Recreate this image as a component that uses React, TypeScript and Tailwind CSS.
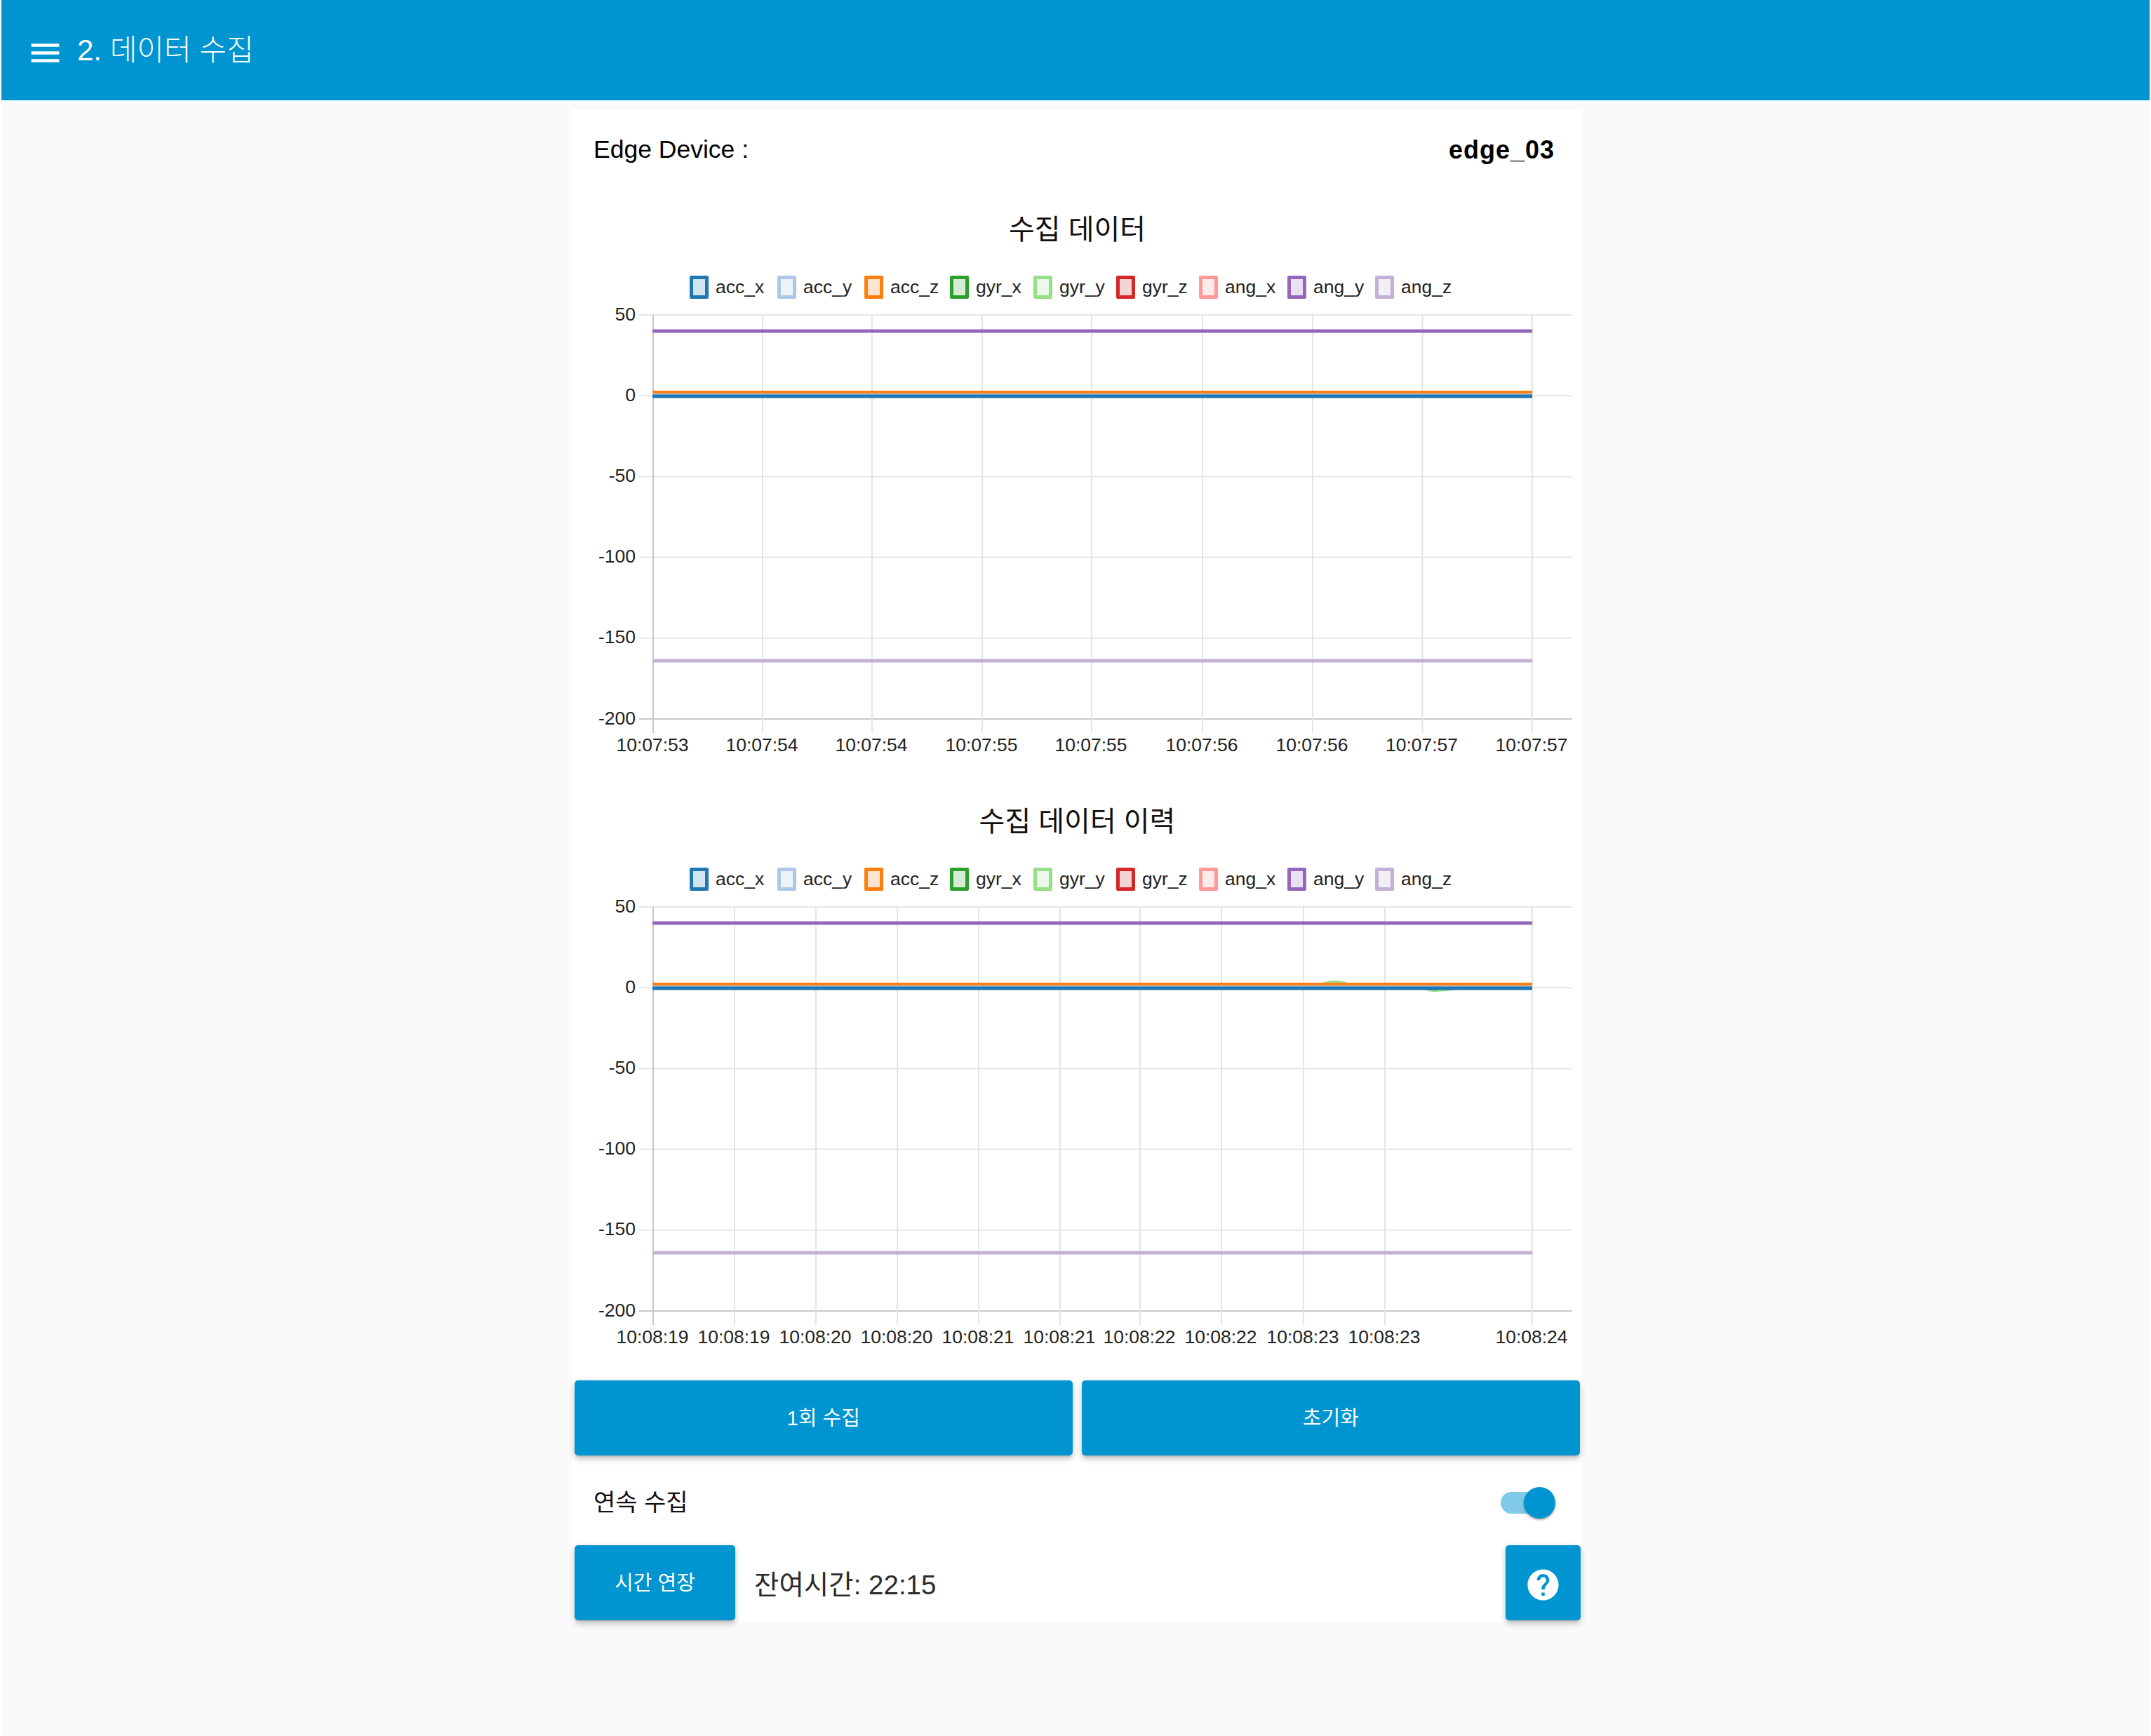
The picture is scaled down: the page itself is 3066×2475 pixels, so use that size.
import { useState } from "react";

const series = [
  { name: "acc_x", color: "#1f77b4", fill: "rgba(31,119,180,0.2)", y: 117, w: 5, cell: "w-[125px]" },
  { name: "acc_y", color: "#aec7e8", fill: "rgba(174,199,232,0.2)", y: 114, w: 5, cell: "w-[124px]" },
  { name: "acc_z", color: "#ff7f0e", fill: "rgba(255,127,14,0.2)", y: 111, w: 4, cell: "w-[122px]" },
  { name: "gyr_x", color: "#2ca02c", fill: "rgba(44,160,44,0.2)", y: 115, w: 4, cell: "w-[119px]" },
  { name: "gyr_y", color: "#98df8a", fill: "rgba(152,223,138,0.2)", y: 115, w: 4, cell: "w-[118px]" },
  { name: "gyr_z", color: "#d62728", fill: "rgba(214,39,40,0.2)", y: 115, w: 4, cell: "w-[118px]" },
  { name: "ang_x", color: "#ff9896", fill: "rgba(255,152,150,0.2)", y: 115, w: 4, cell: "w-[126px]" },
  { name: "ang_y", color: "#9467bd", fill: "rgba(148,103,189,0.2)", y: 24, w: 5, cell: "w-[125px]" },
  { name: "ang_z", color: "#c5b0d5", fill: "rgba(197,176,213,0.2)", y: 494, w: 5, cell: "" },
];

// line draw order: the blue line sits on top of the pale ones
const drawOrder = ["ang_z", "ang_y", "ang_x", "gyr_z", "gyr_y", "gyr_x", "acc_y", "acc_z", "acc_x"];

const yTicks = ["50", "0", "-50", "-100", "-150", "-200"];

const liveTicks = [
  { x: 115, label: "10:07:53" },
  { x: 271, label: "10:07:54" },
  { x: 427, label: "10:07:54" },
  { x: 584, label: "10:07:55" },
  { x: 740, label: "10:07:55" },
  { x: 898, label: "10:07:56" },
  { x: 1055, label: "10:07:56" },
  { x: 1211.5, label: "10:07:57" },
  { x: 1368, label: "10:07:57" },
];

const historyTicks = [
  { x: 115, label: "10:08:19" },
  { x: 231, label: "10:08:19" },
  { x: 347, label: "10:08:20" },
  { x: 463, label: "10:08:20" },
  { x: 579, label: "10:08:21" },
  { x: 695, label: "10:08:21" },
  { x: 809, label: "10:08:22" },
  { x: 925, label: "10:08:22" },
  { x: 1042, label: "10:08:23" },
  { x: 1158, label: "10:08:23" },
  { x: 1368, label: "10:08:24" },
];

const tickFont = "'Liberation Sans', sans-serif";

const Legend = () => (
  <div className="flex h-[34px] items-center pl-[167px]">
    {series.map((s) => (
      <div key={s.name} className={`flex items-center ${s.cell}`}>
        <span
          className="h-[33px] w-[27px] rounded-[2px] border-[5px]"
          style={{ borderColor: s.color, backgroundColor: s.fill }}
        />
        <span className="ml-[10px] text-[26.5px] leading-none text-[#222]">{s.name}</span>
      </div>
    ))}
  </div>
);

type ChartProps = {
  ticks: { x: number; label: string }[];
  history?: boolean;
};

const Chart = ({ ticks, history }: ChartProps) => (
  <svg width="1439" height="650" viewBox="0 0 1439 650" className="block">
    <g transform="translate(0 20)">
      {yTicks.map((t, i) => {
        const y = 1 + i * 115.2;
        return (
          <g key={t}>
            <line x1="95" x2="1425" y1={y} y2={y} stroke={i === 5 ? "#c8c8c8" : "#e6e6e6"} strokeWidth="2" />
            <text x="90" y={y + 7.5} textAnchor="end" fontSize="26.5" fill="#222" fontFamily={tickFont}>
              {t}
            </text>
          </g>
        );
      })}
      {ticks.map((t, i) => (
        <g key={t.x}>
          <line x1={t.x} x2={t.x} y1="1" y2="597" stroke={i === 0 ? "#c8c8c8" : "#e4e4e4"} strokeWidth="2" />
          <text x={t.x - 1} y="623" textAnchor="middle" fontSize="26.5" fill="#222" fontFamily={tickFont}>
            {t.label}
          </text>
        </g>
      ))}
      {/* gyr wobble, history chart only */}
      {history && (
        <path
          d="M1045 113C1065 112 1075 105 1087 106C1100 105 1110 112 1121 113L1190 113C1210 117 1220 122 1228 122C1240 122 1270 118 1297 116Z"
          fill="#98df8a"
        />
      )}
      {drawOrder.map((name) => {
        const s = series.find((d) => d.name === name)!;
        return <line key={name} x1="114" x2="1368" y1={s.y} y2={s.y} stroke={s.color} strokeWidth={s.w} />;
      })}
    </g>
  </svg>
);

const ChartBlock = ({ title, ticks, history }: { title: string; history?: boolean; ticks: { x: number; label: string }[] }) => (
  <section>
    <h2 className="text-center text-[40px] leading-[60px] text-[#111]">{title}</h2>
    <div className="mt-[35px]">
      <Legend />
    </div>
    <div className="mt-[2px]">
      <Chart ticks={ticks} history={history} />
    </div>
  </section>
);

const ActionButton = ({ children, className }: { children: React.ReactNode; className: string }) => (
  <button
    className={`flex h-[107px] items-center justify-center rounded-[5px] bg-[#0094d0] pt-[2px] text-[29px] text-white shadow-[0_3px_3px_-2px_rgba(0,0,0,0.2),0_6px_8px_0_rgba(0,0,0,0.14),0_2px_10px_0_rgba(0,0,0,0.12)] ${className}`}
  >
    {children}
  </button>
);

export default function App() {
  const [on, setOn] = useState(true);

  return (
    <div
      className="bg-white px-[2px]"
      style={{ fontFamily: "'Liberation Sans', 'Noto Sans CJK KR', sans-serif" }}
    >
      <div className="min-h-[2475px] bg-[#fafafa]">
        <header className="flex h-[143px] items-center bg-[#0094d0] pl-[36px] text-white">
          <svg width="53" height="53" viewBox="0 0 24 24" fill="#fff" className="mt-[7px]">
            <path d="M3 18h18v-2H3v2zm0-5h18v-2H3v2zm0-7v2h18V6H3z" />
          </svg>
          <h1 className="ml-[19px] text-[42px] font-light leading-none">2. 데이터 수집</h1>
        </header>

        <main className="ml-[814px] mt-[13px] h-[2157px] w-[1439px] bg-white">
          <div className="flex h-[114px] items-center justify-between pl-[30px] pr-[39px] pt-[1px] text-[35.5px]">
            <span>Edge Device :</span>
            <span className="text-[36px] font-bold tracking-[1px]">edge_03</span>
          </div>

          <div className="mt-[27px]">
            <ChartBlock title="수집 데이터" ticks={liveTicks} />
          </div>
          <div className="mt-[63px]">
            <ChartBlock title="수집 데이터 이력" ticks={historyTicks} history />
          </div>

          <div className="mt-[46px] flex gap-[13px] px-[3px]">
            <ActionButton className="w-[710px]">1회 수집</ActionButton>
            <ActionButton className="w-[711px]">초기화</ActionButton>
          </div>

          <div className="mt-[22px] flex h-[90px] items-center justify-between pl-[30px] pr-[38px]">
            <span className="text-[34px] text-[#111]">연속 수집</span>
            <button className="relative h-[44px] w-[78px]" onClick={() => setOn(!on)}>
              <span className="absolute left-0 top-[7px] h-[31px] w-[74px] rounded-full bg-[#80c9e7]" />
              <span
                className={`absolute top-0 h-[45px] w-[45px] rounded-full bg-[#0094d0] shadow-[0_2px_3px_rgba(0,0,0,0.35)] ${on ? "right-0" : "left-0"}`}
              />
            </button>
          </div>

          <div className="mt-[16px] flex items-center pl-[3px] pr-[2px]">
            <ActionButton className="w-[229px]">시간 연장</ActionButton>
            <span className="ml-[27px] mt-[6px] text-[38.5px] text-[#2b2b2b]">잔여시간: 22:15</span>
            <ActionButton className="ml-auto w-[107px]">
              <svg width="53" height="53" viewBox="0 0 24 24" fill="#fff" className="mt-[4px]">
                <path d="M12 2C6.48 2 2 6.48 2 12s4.48 10 10 10 10-4.48 10-10S17.52 2 12 2zm1 17h-2v-2h2v2zm2.07-7.75l-.9.92C13.45 12.9 13 13.5 13 15h-2v-.5c0-1.1.45-2.1 1.17-2.83l1.24-1.26c.37-.36.59-.86.59-1.41 0-1.1-.9-2-2-2s-2 .9-2 2H8c0-2.21 1.79-4 4-4s4 1.79 4 4c0 .88-.36 1.68-.93 2.25z" />
              </svg>
            </ActionButton>
          </div>
        </main>
      </div>
    </div>
  );
}
